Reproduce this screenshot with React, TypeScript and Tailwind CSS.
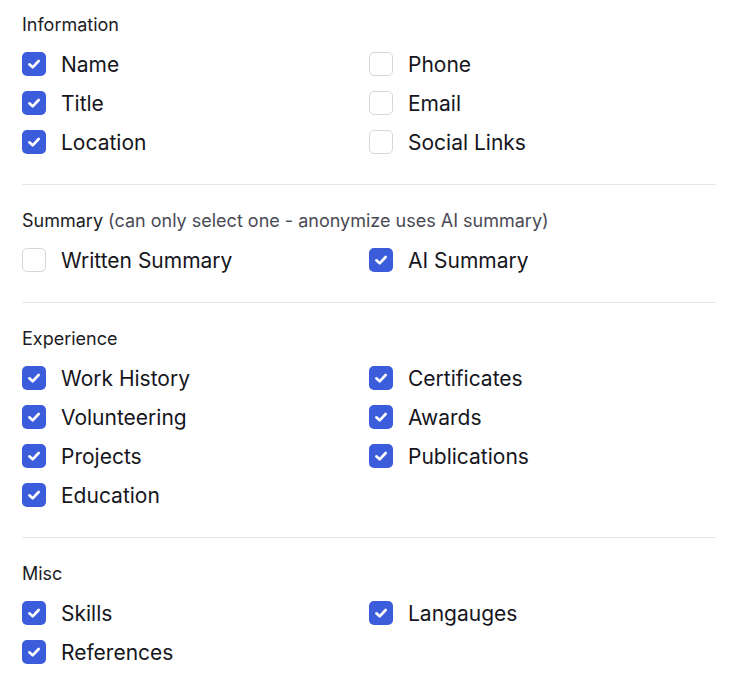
import React, { useState } from 'react';

type Item = { key: string; label: string };

const CheckIcon: React.FC = () => (
  <svg viewBox="0 0 24 24" className="h-[16px] w-[16px]" fill="none" stroke="white" strokeWidth={4} strokeLinecap="round" strokeLinejoin="round">
    <polyline points="5 12.5 10 17 19 7.5" />
  </svg>
);

const Check: React.FC<{ label: string; checked: boolean; onToggle: () => void }> = ({ label, checked, onToggle }) => (
  <label className="flex h-6 cursor-pointer items-center gap-[15px]" onClick={onToggle}>
    <span
      className={
        checked
          ? 'flex h-6 w-6 items-center justify-center rounded-[5px] bg-[#3b5cdb]'
          : 'flex h-6 w-6 items-center justify-center rounded-[5px] border border-[#d6d6db] bg-white'
      }
    >
      {checked && <CheckIcon />}
    </span>
    <span className="pt-[2px] text-[21px] leading-6 text-[#16161d]">{label}</span>
  </label>
);

const Section: React.FC<{
  title: React.ReactNode;
  items: Item[];
  state: Record<string, boolean>;
  toggle: (k: string) => void;
  first?: boolean;
  last?: boolean;
}> = ({ title, items, state, toggle, first, last }) => (
  <div className={`${first ? 'pt-3' : 'pt-[23px]'} ${last ? 'pb-6' : 'pb-[30px] border-b border-[#e6e6ea]'}`}>
    <div className="pt-px text-[18px] leading-6 text-[#1c1c24]">{title}</div>
    <div className="mt-[15px] grid grid-cols-2 gap-y-[15px]">
      {items.map((it) => (
        <Check key={it.key} label={it.label} checked={!!state[it.key]} onToggle={() => toggle(it.key)} />
      ))}
    </div>
  </div>
);

const App: React.FC = () => {
  const [state, setState] = useState<Record<string, boolean>>({
    name: true,
    title: true,
    location: true,
    aiSummary: true,
    work: true,
    certs: true,
    volunteer: true,
    awards: true,
    projects: true,
    pubs: true,
    education: true,
    skills: true,
    langs: true,
    refs: true,
  });

  const toggle = (k: string) => {
    setState((s) => {
      const next = { ...s, [k]: !s[k] };
      // summary options are exclusive
      if (k === 'written' && next.written) next.aiSummary = false;
      if (k === 'aiSummary' && next.aiSummary) next.written = false;
      return next;
    });
  };

  return (
    <div className="min-h-screen bg-white px-[22px] font-['Inter','Noto_Sans',sans-serif]">
      <Section
        first
        title="Information"
        state={state}
        toggle={toggle}
        items={[
          { key: 'name', label: 'Name' },
          { key: 'phone', label: 'Phone' },
          { key: 'title', label: 'Title' },
          { key: 'email', label: 'Email' },
          { key: 'location', label: 'Location' },
          { key: 'social', label: 'Social Links' },
        ]}
      />
      <Section
        title={
          <>
            Summary <span className="text-[#4a4a55]">(can only select one - anonymize uses AI summary)</span>
          </>
        }
        state={state}
        toggle={toggle}
        items={[
          { key: 'written', label: 'Written Summary' },
          { key: 'aiSummary', label: 'AI Summary' },
        ]}
      />
      <Section
        title="Experience"
        state={state}
        toggle={toggle}
        items={[
          { key: 'work', label: 'Work History' },
          { key: 'certs', label: 'Certificates' },
          { key: 'volunteer', label: 'Volunteering' },
          { key: 'awards', label: 'Awards' },
          { key: 'projects', label: 'Projects' },
          { key: 'pubs', label: 'Publications' },
          { key: 'education', label: 'Education' },
        ]}
      />
      <Section
        last
        title="Misc"
        state={state}
        toggle={toggle}
        items={[
          { key: 'skills', label: 'Skills' },
          { key: 'langs', label: 'Langauges' },
          { key: 'refs', label: 'References' },
        ]}
      />
    </div>
  );
};

export default App;
